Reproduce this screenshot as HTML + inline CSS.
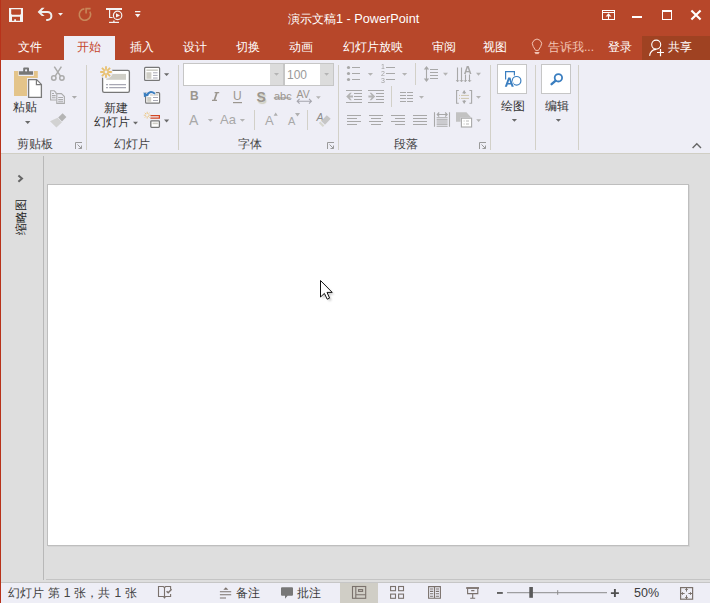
<!DOCTYPE html><html><head><meta charset="utf-8"><style>
*{box-sizing:border-box}
body{margin:0;width:710px;height:603px;overflow:hidden;position:relative;font-family:"Liberation Sans",sans-serif;background:#dedede}
.a{position:absolute}
.t{position:absolute;white-space:nowrap;font-size:12px;line-height:12px}
#title{left:0;top:0;width:710px;height:60px;background:#b7472a}
#ribbon{left:0;top:60px;width:710px;height:94px;background:#eeeef6;border-bottom:1px solid #d0cec4}
.tab{color:#fff}
.lbl{color:#464646}
.sep{position:absolute;width:1px;background:#d2d0c8}
#status{left:0;top:582px;width:710px;height:21px;background:#eeeef6;border-top:1px solid #c6c6c6}
</style></head><body>
<div id="title" class="a"></div>
<div class="a" style="left:0;top:0;width:1px;height:603px;background:#b8321a;z-index:5"></div>
<!-- QAT -->
<div class="t tab" style="left:288px;top:12.5px;font-size:12px;line-height:13px">演示文稿<span style="font-size:12.7px">1 - PowerPoint</span></div>
<!-- tabs -->
<div class="a" style="left:64px;top:36px;width:51px;height:24px;background:#eeeef6"></div>
<div class="a" style="left:642px;top:36px;width:68px;height:24px;background:#9f4222"></div>
<div class="t tab" style="left:18px;top:41px">文件</div>
<div class="t" style="left:77px;top:41px;color:#c5462a">开始</div>
<div class="t tab" style="left:130px;top:41px">插入</div>
<div class="t tab" style="left:183px;top:41px">设计</div>
<div class="t tab" style="left:236px;top:41px">切换</div>
<div class="t tab" style="left:289px;top:41px">动画</div>
<div class="t tab" style="left:343px;top:41px">幻灯片放映</div>
<div class="t tab" style="left:432px;top:41px">审阅</div>
<div class="t tab" style="left:483px;top:41px">视图</div>
<div class="t" style="left:548px;top:41px;color:#f2c4b4">告诉我...</div>
<div class="t tab" style="left:608px;top:41px">登录</div>
<div class="t tab" style="left:668px;top:41px">共享</div>
<!-- ribbon -->
<div id="ribbon" class="a"></div>
<div class="sep" style="left:86px;top:65px;height:85px"></div>
<div class="sep" style="left:178px;top:65px;height:85px"></div>
<div class="sep" style="left:338px;top:65px;height:85px"></div>
<div class="sep" style="left:490px;top:65px;height:85px"></div>
<div class="sep" style="left:535px;top:65px;height:85px"></div>
<div class="sep" style="left:578px;top:65px;height:85px"></div>
<div class="t lbl" style="left:17px;top:138px">剪贴板</div>
<div class="t lbl" style="left:114px;top:138px">幻灯片</div>
<div class="t lbl" style="left:238px;top:138px">字体</div>
<div class="t lbl" style="left:394px;top:138px">段落</div>
<div class="t" style="left:13px;top:101px;color:#333">粘贴</div>
<div class="t" style="left:104px;top:102px;color:#333">新建</div>
<div class="t" style="left:94px;top:116px;color:#333">幻灯片</div>
<div class="t" style="left:501px;top:100px;color:#333">绘图</div>
<div class="t" style="left:545px;top:100px;color:#333">编辑</div>
<!-- font boxes -->
<div class="a" style="left:183px;top:63px;width:101px;height:23px;background:#fff;border:1px solid #c6c6c6"></div>
<div class="a" style="left:284px;top:63px;width:50px;height:23px;background:#fff;border:1px solid #c6c6c6"></div>
<!-- drawing boxes -->
<div class="a" style="left:497px;top:64px;width:30px;height:30px;background:#fff;border:1px solid #c6c6c6"></div>
<div class="a" style="left:541px;top:64px;width:30px;height:30px;background:#fff;border:1px solid #c6c6c6"></div>
<!-- work area -->
<div class="a" style="left:43px;top:156px;width:1px;height:424px;background:#b8b8b8"></div>
<div class="a" style="left:47px;top:184px;width:642px;height:362px;background:#fff;border:1px solid #bebebe;box-shadow:1px 1px 0 #d4d4d4"></div>
<div class="a" style="left:46px;top:579px;width:664px;height:1px;background:#c4c4c4"></div>
<div class="t" style="left:190px;top:90px;font:bold 12px/12px 'Liberation Sans',sans-serif;color:#9b968f">B</div>

<div class="t" style="left:233px;top:90px;font:12px/12px 'Liberation Sans',sans-serif;color:#9b968f">U</div>
<div class="t" style="left:256.5px;top:90px;font:bold 14px/14px 'Liberation Sans',sans-serif;color:#9b968f;text-shadow:1px 1.5px 1px #cfcfc0">S</div>
<div class="t" style="left:274px;top:91px;font:11px/11px 'Liberation Sans',sans-serif;color:#9b968f">abc</div>
<div class="t" style="left:296.5px;top:89px;font:10.5px/11px 'Liberation Sans',sans-serif;color:#9b968f">AV</div>
<div class="t" style="left:189px;top:113px;font:14px/14px 'Liberation Sans',sans-serif;color:#a8a8a8">A</div>
<div class="t" style="left:220px;top:113px;font:13px/13px 'Liberation Sans',sans-serif;color:#a8a8a8">Aa</div>
<div class="t" style="left:265px;top:114px;font:13px/13px 'Liberation Sans',sans-serif;color:#a8a8a8">A</div>
<div class="t" style="left:288px;top:116px;font:11px/11px 'Liberation Sans',sans-serif;color:#a8a8a8">A</div>
<div class="t" style="left:316.5px;top:111.5px;font:italic 10.5px/10px 'Liberation Sans',sans-serif;color:#8c8c8c">A</div>
<div class="t" style="left:287px;top:69px;font:12px/12px 'Liberation Sans',sans-serif;color:#9a9a9a">100</div>
<div class="t" style="left:463.8px;top:65px;font:bold 11px/11px 'Liberation Sans',sans-serif;color:#a8a8a8;transform:translateZ(0)">A</div>

<div class="t" style="left:381px;top:63px;font:7px/7px 'Liberation Sans',sans-serif;color:#a0a0a0;z-index:4;transform:translateZ(0)">1<br>2<br>3</div>
<div class="t" style="left:14.5px;top:235px;color:#222;transform:rotate(-90deg);transform-origin:0 0">缩略图</div>
<!-- status -->
<div id="status" class="a"></div>
<div class="a" style="left:340px;top:583px;width:38px;height:20px;background:#d0cec6"></div>
<div class="t" style="left:8px;top:587px;color:#444;word-spacing:0.6px">幻灯片 第 1 张，共 1 张</div>
<div class="t" style="left:236px;top:587px;color:#3c3c3c">备注</div>
<div class="t" style="left:297px;top:587px;color:#3c3c3c">批注</div>
<div class="t" style="left:634px;top:586.5px;color:#3c3c3c;font-size:12.5px">50%</div>
<svg class="a" style="left:0;top:0;z-index:3" width="710" height="603" viewBox="0 0 710 603">
<!-- QAT save -->
<g fill="#f4f4f4">
<rect x="9" y="8" width="14" height="14"/>
</g>
<path fill="#b7472a" d="M11.2 9.2H20.9V14L20 14.8H12.1L11.2 14Z M12 16.8H20V20.8H16V19.2H14.2V20.8H12Z"/>
<!-- undo -->
<path fill="#eeeeee" d="M37.6 11.9L41.8 7.8H44.6L40.5 11.9L44.6 16H41.8Z"/>
<path fill="none" stroke="#eeeeee" stroke-width="2" d="M40 11.9H47.4A4 4 0 0 1 47.4 19.9H46.2"/>
<path fill="#f4f4f4" d="M58 13H63L60.5 15.8Z"/>
<!-- redo disabled -->
<path fill="none" stroke="#c8875a" stroke-width="1.6" d="M84.4 8.9A5.7 5.7 0 1 0 89.8 11.6"/>
<path fill="none" stroke="#c8875a" stroke-width="1.6" d="M86.1 13.4V8.6H90.6"/>
<!-- slideshow from start -->
<g fill="none" stroke="#f4f4f4" stroke-width="1.2">
<path d="M106 9H122" stroke-width="2"/>
<path d="M109.6 10V17.5H112.6"/>
<circle cx="117.6" cy="15.4" r="4.2"/>
<path d="M109 22.4H119"/>
</g>
<path fill="#f4f4f4" d="M116 13.2L120 15.4L116 17.6Z M113.2 20.6H114.6V22H113.2Z"/>
<!-- customize QAT -->
<path fill="#f4f4f4" d="M135 11H140.4V12.2H135Z M135 14H140.4L137.7 17.6Z"/>
<!-- window controls -->
<g fill="none" stroke="#fff" stroke-width="1">
<rect x="602.5" y="10.5" width="12" height="9"/>
<path d="M602.5 12.5H614.5"/>
<path d="M608.5 19.5V15"/>
<rect x="662.5" y="10.5" width="9" height="9"/>
</g>
<rect x="662" y="10" width="10" height="2" fill="#fff"/><path fill="#fff" d="M608.5 13.2L611.4 16.6H609.2V15.8H607.8V16.6H605.6Z"/>
<rect x="632" y="16" width="10" height="2" fill="#fff"/>
<path stroke="#fff" stroke-width="2.1" d="M691.4 10.4L700.6 19.6M700.6 10.4L691.4 19.6"/>
<!-- lightbulb -->
<g fill="none" stroke="#f2c4b4" stroke-width="1">
<path d="M535.6 50.4L533.2 46.4A4.6 4.6 0 1 1 540.8 46.4L538.4 50.4Z"/>
<path d="M534.6 52.5H539.4M535.2 53.6H538.8"/>
</g>
<!-- person -->
<g fill="none" stroke="#fff" stroke-width="1.1">
<circle cx="656.2" cy="44.6" r="4.5"/>
<path d="M649.6 55.8C650.2 51.8 652.8 49.6 656 49.4"/>
<path d="M660.5 49V56.2M657 52.5H664" stroke-width="1.2"/>
</g>
</svg>
<svg class="a" style="left:0;top:0;z-index:3" width="710" height="603" viewBox="0 0 710 603">
<!-- paste -->
<path fill="#e4c48a" d="M14 71H18.4V76H33.8V71H37.8V78H27V96H14Z"/>
<path fill="#777" d="M19 71.2H23.2V68.2Q23.4 67.6 24 67.6H28.2Q28.8 67.6 29 68.2V71.2H33V74.8H19Z"/>
<circle cx="26.1" cy="70.4" r="1.1" fill="#eeeef6"/>
<path fill="#fff" stroke="#7a7a7a" stroke-width="1.3" d="M28.6 79.6H36.6L41.4 84.4V97.4H28.6Z"/>
<path fill="none" stroke="#7a7a7a" stroke-width="1.2" d="M36.4 79.8V84.6H41.2"/>
<!-- scissors -->
<g fill="none" stroke="#ababab" stroke-width="1.5">
<circle cx="53.8" cy="78" r="2.2"/>
<circle cx="61.9" cy="78" r="2.2"/>
<path d="M55.2 76.2L61.4 66.6M60.5 76.2L54.3 66.6"/>
</g>
<!-- copy -->
<g fill="none" stroke="#ababab" stroke-width="1.1">
<path d="M56 94V92.6L54.2 90.8H50.6V100H56.4"/>
<path d="M56.8 93.6H61.4L64.4 96.6V103.4H56.8Z"/>
<path d="M52 93.5H54M52 95.6H55.6M52 97.7H55.6 M58.2 97.5H63M58.2 99.6H63M58.2 101.7H63"/>
</g>
<path fill="#ababab" d="M71.8 96H77L74.4 98.8Z"/>
<!-- painter -->
<path fill="#b4b4b4" d="M62.6 113.2L66.4 117L62 121.4L58.2 117.6Z"/>
<path fill="#d2d2d2" d="M57.6 117.8L62 122.2L56.4 127.6L50 121.2Z"/>
<!-- paste arrow -->
<path fill="#6a6a6a" d="M25 121H30.4L27.7 124Z"/>
<!-- launcher -->
<g fill="none" stroke="#9a9a9a" stroke-width="1"><path d="M75.5 149V142.5H82"/><path d="M77.5 144.5L81.5 148.5M78.5 148.5H81.5V145.5"/></g>
<!-- new slide -->
<rect x="102.6" y="70.4" width="26.8" height="22" rx="1.6" fill="#fff" stroke="#777" stroke-width="1.3"/>
<rect x="106.2" y="73.9" width="19.8" height="5.9" fill="#cfcec6"/>
<path stroke="#a8a8b4" stroke-width="1.1" d="M106 84.6H108M109.2 84.6H126M106 87.6H108M109.2 87.6H126"/>
<circle cx="106" cy="72" r="6.8" fill="#eeeef6"/>
<g stroke="#e8c070" stroke-width="1.8" stroke-linecap="butt"><path d="M106 66.2V69.8M106 74.2V77.8M100.2 72H103.8M108.2 72H111.8M101.9 67.9L104.4 70.4M107.6 73.6L110.1 76.1M110.1 67.9L107.6 70.4M104.4 73.6L101.9 76.1"/></g>
<circle cx="106" cy="72" r="2" fill="none" stroke="#e8c070" stroke-width="1.2"/>
<path fill="#6a6a6a" d="M133 121.8H138L135.5 124.6Z"/>
<!-- layout -->
<rect x="144.6" y="67.4" width="15" height="13" rx="1" fill="#fff" stroke="#777" stroke-width="1.2"/>
<rect x="146.4" y="69.4" width="11.4" height="1.6" fill="#cfcec6"/>
<rect x="146.4" y="72.2" width="5" height="6.6" fill="#cfcec6"/>
<path stroke="#a8a8b4" stroke-width="1" d="M153 72.8H157.6M153 75.4H157.6M153 78H157.6"/>
<path fill="#6a6a6a" d="M164 73.2H169.2L166.6 76Z"/>
<!-- reset -->
<rect x="145.6" y="92.6" width="14" height="10.6" rx="1" fill="#fff" stroke="#777" stroke-width="1.2"/>
<rect x="150" y="94.2" width="8.4" height="1.4" fill="#cfcec6"/>
<rect x="147.2" y="97" width="4" height="4.8" fill="#cfcec6"/>
<path stroke="#a8a8b4" stroke-width="1" d="M153 97.5H158M153 100.5H158"/>
<path fill="none" stroke="#eeeef6" stroke-width="4" d="M146.6 95.8Q149.4 89.6 155 93.8"/>
<path fill="none" stroke="#3b7fc0" stroke-width="2" d="M146.6 95.8Q149.4 89.6 155 93.8"/>
<path fill="#3b7fc0" d="M143.6 92.2L149.2 95L144 97.2Z"/>
<!-- section -->
<rect x="150.8" y="120.8" width="8.6" height="6.6" rx="0.8" fill="#fff" stroke="#777" stroke-width="1.3"/>
<rect x="152.6" y="122.6" width="5.2" height="1.6" fill="#cfcec6"/>
<path fill="#d24726" d="M150.4 115H160V118.8H150.4V117.6H158.8V116.2H150.4Z"/>
<g stroke="#ecc57e" stroke-width="0.9"><path d="M147.2 111.8V114M147.2 116.4V118.6M143.8 115.2H146M148.4 115.2H150.6M144.8 112.8L146.2 114.2M148.2 116.2L149.6 117.6M149.6 112.8L148.2 114.2M146.2 116.2L144.8 117.6"/></g>
<path fill="#6a6a6a" d="M164 119.6H169.2L166.6 122.4Z"/>
<!-- group launchers -->
<g fill="none" stroke="#9a9a9a" stroke-width="1"><path d="M327.5 149V142.5H334"/><path d="M329.5 144.5L333.5 148.5M330.5 148.5H333.5V145.5"/></g>
<g fill="none" stroke="#9a9a9a" stroke-width="1"><path d="M479.5 149V142.5H486"/><path d="M481.5 144.5L485.5 148.5M482.5 148.5H485.5V145.5"/></g>
<!-- collapse -->
<path fill="none" stroke="#666" stroke-width="1.4" d="M692.6 148L696.8 143.8L701 148"/>
</svg>
<svg class="a" style="left:0;top:0;z-index:3" width="710" height="603" viewBox="0 0 710 603">
<!-- font dropdown buttons -->
<rect x="270" y="64" width="13" height="21" fill="#dcdcdc"/>
<rect x="320" y="64" width="13" height="21" fill="#dcdcdc"/>
<path fill="#b4b4b4" d="M274 73H279L276.5 75.8Z M324.2 73H329L326.6 75.8Z"/>
<!-- U underline -->
<rect x="233" y="102" width="9" height="1.2" fill="#9b968f"/>
<path fill="#9b968f" d="M214.6 92H219.2V93.2H217.6L215.4 99.8H217V101H212V99.8H213.6L215.8 93.2H214.6Z"/>
<!-- S shadow -->
<!-- abc strike -->
<rect x="273.8" y="97.4" width="16.6" height="1.1" fill="#9b968f"/>
<!-- AV arrow -->
<g fill="none" stroke="#a5a5ad" stroke-width="1.1"><path d="M297 101.2H311.6M299.6 98.8L297.2 101.2L299.6 103.6M309 98.8L311.4 101.2L309 103.6"/></g>
<path fill="#b4b4b4" d="M316 96.2H320.8L318.4 98.9Z"/>
<!-- A arrows -->
<path fill="#b4b4b4" d="M207.8 119H213L210.4 121.8Z M239.8 119H245L242.4 121.8Z"/>
<path fill="#b0b0b0" d="M273.6 115.8L275.7 112.6L277.8 115.8Z M295 113H300L297.5 116.4Z"/>
<rect x="254" y="110" width="1" height="20" fill="#d2d0c8"/>
<rect x="307" y="110" width="1" height="20" fill="#d2d0c8"/>
<!-- clear formatting -->
<path fill="#c6c6c6" d="M321.2 121L326.8 115.2L330.7 118.8L325 124.7Z"/>
<path fill="#d6d6ce" d="M318.8 122.9L320.3 121.5L324.3 125.6L322.8 127Z"/>
<!-- paragraph: bullets -->
<g fill="#a8a8a8"><circle cx="348.5" cy="67.5" r="1.6"/><circle cx="348.5" cy="73.5" r="1.6"/><circle cx="348.5" cy="79.5" r="1.6"/></g>
<path stroke="#a8a8a8" stroke-width="1" d="M352 67.5H360M352 73.5H360M352 79.5H360 M386 67.5H395M386 73.5H395M386 79.5H395"/>
<path fill="#b4b4b4" d="M367.8 73H373L370.4 75.8Z M402 73H407.2L404.6 75.8Z"/>
<!-- indent -->
<path stroke="#a8a8a8" stroke-width="1" d="M346 90.5H362M354 93.5H362M354 96.5H362M354 99.5H362M346 102.5H362 M368 90.5H384M376 93.5H384M376 96.5H384M376 99.5H384M368 102.5H384"/>
<path fill="#b4b4b4" d="M346.2 96.5L350 92.8H351.8L349.6 95.4H353V97.6H349.6L351.8 100.2H350Z"/>
<path fill="#b4b4b4" d="M375.2 96.5L371.4 92.8H369.6L371.8 95.4H368.4V97.6H371.8L369.6 100.2H371.4Z"/>
<rect x="391" y="86" width="1" height="21" fill="#d2d0c8"/>
<path stroke="#a8a8a8" stroke-width="1" d="M400 92.5H406M407 92.5H413M400 95.5H406M407 95.5H413M400 98.5H406M407 98.5H413M400 101.5H406M407 101.5H413"/>
<path fill="#b4b4b4" d="M419 96H424L421.5 98.8Z"/>
<rect x="415" y="63" width="1" height="22" fill="#d2d0c8"/>
<!-- align -->
<path stroke="#a8a8a8" stroke-width="1" d="M347 115.5H361M347 118.5H357M347 121.5H361M347 124.5H357 M369 115.5H383M371 118.5H381M369 121.5H383M371 124.5H381 M391 115.5H405M395 118.5H405M391 121.5H405M395 124.5H405 M413 115.5H427M413 118.5H427M413 121.5H427M413 124.5H427"/>
<!-- distributed -->
<path stroke="#a8a8a8" stroke-width="1.1" d="M434.5 112.2V126.8M449.5 112.2V126.8 M436.6 117.8H447.6M436.6 119.9H447.6M436.6 122H447.6M436.6 124.1H447.6M436.6 126.2H447.6"/>
<path fill="none" stroke="#a8a8a8" stroke-width="1.1" d="M437 114.5H447.4M439.2 112.5L437.2 114.5L439.2 116.5M445.2 112.5L447.2 114.5L445.2 116.5"/>
<!-- smartart -->
<path fill="#c2c2c2" d="M456 112.2H466.4L471.2 117.4H460.6V121.8H456Z"/>
<rect x="461.4" y="118.2" width="10.2" height="8.8" fill="#fff" stroke="#a8a8a8" stroke-width="1.1"/>
<path stroke="#b8b8b8" stroke-width="1" d="M463.6 121H464.6M466 121H469M463.6 124H464.6M466 124H469"/>
<path fill="#b4b4b4" d="M476.2 119.3H481L478.6 121.9Z"/>
<!-- line spacing -->
<path stroke="#a8a8a8" stroke-width="1.1" d="M426.5 68V80M430 69.5H438M430 72.5H438M430 75.5H438M430 78.5H438"/>
<path fill="#a8a8a8" d="M423.8 69.4L426.5 66L429.2 69.4Z M423.8 78.6L426.5 82L429.2 78.6Z"/>
<path fill="#b4b4b4" d="M443 72.8H448L445.5 75.8Z M476 72.8H481L478.5 75.8Z M476 96H481L478.5 98.8Z"/>
<!-- text direction -->
<path stroke="#a8a8a8" stroke-width="1.1" d="M457.5 67.4V81.6M461.5 67.4V81.6M465.5 74.6V81.6M469.5 74.6V81.6"/>
<path fill="none" stroke="#a8a8a8" stroke-width="1" d="M456.2 80.2L457.6 81.8L459 80.2M460.1 80.2L461.5 81.8L462.9 80.2M463.9 80.2L465.3 81.8L466.7 80.2M468.2 80.2L469.6 81.8L471 80.2"/>
<!-- align text -->
<path fill="none" stroke="#a8a8a8" stroke-width="1.1" d="M458.8 90.5H456.6V103.3H458.8M469.4 90.5H471.6V103.3H469.4"/>
<path stroke="#a8a8a8" stroke-width="1.1" d="M464.2 90.4V94M464.2 100V103.6"/>
<path fill="#a8a8a8" d="M462 93.2L464.2 90.4L466.4 93.2Z M462 100.8L464.2 103.6L466.4 100.8Z"/>
<path stroke="#cdc5ad" stroke-width="1" d="M459 95.4H460M461 95.4H469M459 98.4H460M461 98.4H469"/>
<!-- drawing icon -->
<g fill="none" stroke="#3a7ec0" stroke-width="1.2"><path d="M505.6 79.4V71.6H514.4V75.4"/><circle cx="516.6" cy="80.8" r="4.3"/></g>
<path fill="#3a7ec0" stroke="#fff" stroke-width="1.4" fill-rule="evenodd" paint-order="stroke" d="M504.8 86.8L508.2 77.6H510.4L513.8 86.8H511.6L510.9 84.6H507.7L507 86.8Z M508.3 83H510.3L509.3 79.8Z"/>
<!-- magnifier -->
<circle cx="558.4" cy="77.8" r="3.7" fill="none" stroke="#3a7ec0" stroke-width="1.8"/>
<path stroke="#3a7ec0" stroke-width="2.4" stroke-linecap="round" d="M555.4 80.8L551.6 84.2"/>
<!-- dropdown arrows -->
<path fill="#6a6a6a" d="M511.8 119H517L514.4 121.8Z M555.8 119H561L558.4 121.8Z"/>
<!-- left pane -->
<path fill="none" stroke="#666" stroke-width="2" d="M18.4 175.4L22 178.6L18.4 181.8"/>
<!-- status bar icons -->
<g fill="none" stroke="#7a716c" stroke-width="1.1">
<path d="M163.4 586.5H158.5V596.5H163.4L164.5 597.6L165.6 596.5H170.6V594 M170.6 589.6V586.5H165.6L164.5 587.6L163.4 586.5 M164.5 587.6V598.6"/>
<path d="M166.6 591.2L168.2 592.8L171.6 589.2" stroke-width="1.4"/>
<path d="M219.9 591.8H231.2M219.9 594.8H231.2M219.9 598H226"/>
<rect x="352.5" y="586.5" width="13.2" height="11.8"/>
<path d="M355.8 586.6V598.2M355.8 594.8H365.6"/>
<rect x="358.6" y="589.6" width="4" height="1.8"/>
<rect x="390.6" y="586.5" width="4.9" height="4.2"/><rect x="398.6" y="586.5" width="4.9" height="4.2"/>
<rect x="390.6" y="594.1" width="4.9" height="4.2"/><rect x="398.6" y="594.1" width="4.9" height="4.2"/>
<path d="M428.6 586.6H434.5V598.2H428.6Z M434.5 586.6H440.4V598.2H434.5"/>
<path d="M430 589H433.2M430 591.4H433.2M430 593.8H433.2M430 596.2H433.2M435.8 589H439M435.8 591.4H439M435.8 593.8H439M435.8 596.2H439"/>
<path d="M467.6 588.6V593.6H477.8V588.6M471.2 590.6H474.4M472.7 593.6V598M470.2 598.3H475.2"/>
<rect x="680.6" y="587.6" width="12" height="11.6" stroke-width="1.2"/>
</g>
<path fill="#7a716c" d="M223.3 589.8L225.8 587.2L228.4 589.8Z"/>
<rect x="466.2" y="587.1" width="12.8" height="1.8" fill="#7a716c"/>
<path fill="#777" d="M282 587.2H292Q293 587.2 293 588.2V594.8Q293 595.8 292 595.8H287.6L285 598.8V595.8H282Q281 595.8 281 594.8V588.2Q281 587.2 282 587.2Z"/>
<rect x="497" y="592" width="5.8" height="1.9" fill="#606060"/>
<rect x="507" y="592.2" width="100" height="1" fill="#8a8a8a"/>
<rect x="557.2" y="590.2" width="1" height="4.6" fill="#8a8a8a"/>
<rect x="529.3" y="587" width="3.6" height="10.8" fill="#5a5a5a"/>
<path stroke="#505050" stroke-width="1.9" d="M610.9 593.1H618.9M614.9 589.1V597.1"/>
<g stroke="#7a716c" stroke-width="1" fill="none"><path d="M686.5 587.8V591.6M686.5 595.2V599.2M680.8 593.5H684.6M688.4 593.5H692.4 M685.2 589.5H687.8M685.2 597.5H687.8M682.5 592.2V594.8M690.5 592.2V594.8"/></g>
<!-- cursor -->
<filter id="bl" x="-50%" y="-50%" width="200%" height="200%"><feGaussianBlur stdDeviation="1.2"/></filter><path fill="#000" opacity="0.22" filter="url(#bl)" d="M322.5 282.5V299L326.4 295.4L329.2 301.2L331.6 300.1L329 294.4H334.2Z"/>
<path fill="#fff" stroke="#111" stroke-width="1" d="M320.5 280.5V297L324.4 293.4L327.2 299.2L329.6 298.1L327 292.4H332.2Z"/>
</svg>
</body></html>
